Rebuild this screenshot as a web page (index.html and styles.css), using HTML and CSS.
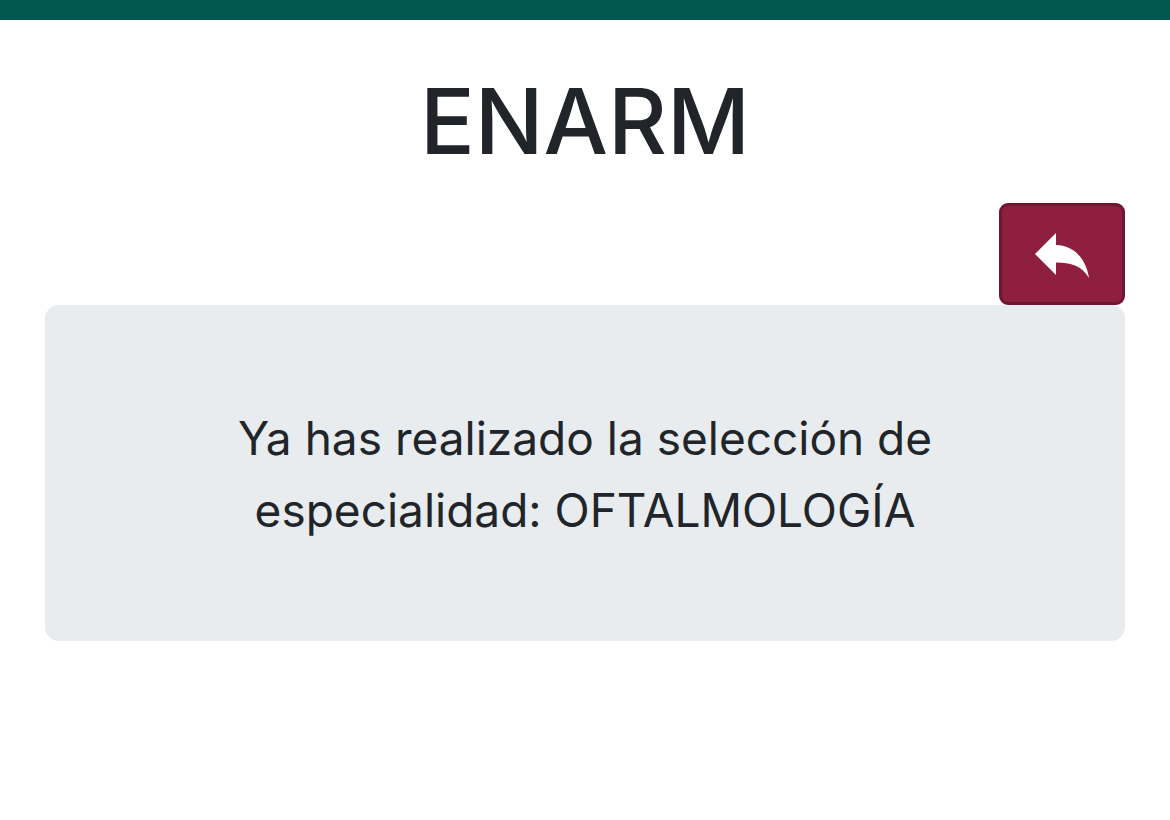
FILE: index.html
```html
<!DOCTYPE html>
<html lang="es">
<head>
  <meta charset="UTF-8">
  <meta name="viewport" content="width=device-width, initial-scale=1.0">
  <title>ENARM</title>
  <link rel="stylesheet" href="styles.css">
</head>
<body>
  <header class="topbar"></header>
  <main class="container">
    <h1>ENARM</h1>
    <div class="actions">
      <button type="button" class="btn-back" aria-label="Regresar">
        <svg viewBox="0 0 54 46" width="54" height="46" aria-hidden="true">
          <path fill="#fff" d="M0 21 L21 0 V12 C38 12 51 25 54 45 C47 33 36 29.500 21 29.500 V42 Z"/>
        </svg>
      </button>
    </div>
    <div class="jumbotron">
      <p>Ya has realizado la selección de especialidad: OFTALMOLOGÍA</p>
    </div>
  </main>
</body>
</html>
```

FILE: styles.css
```css
body { font-family: Inter, sans-serif; margin: 0; background: #fff; color: #212529; }
.topbar { height: 20px; background: #00584e; }
.container { padding: 44px 45px; }
h1 { margin: 0 0 24px; font-size: 91px; line-height: 115px; font-weight: 500; text-align: center; }
.actions { display: flex; justify-content: flex-end; }
.btn-back { display: flex; align-items: center; justify-content: center; width: 126px; height: 102px; padding: 4px 0 0; background: #8e1f3f; border: 3px solid #701532; border-radius: 9px; cursor: pointer; }
.jumbotron { padding: 97px 144px 95px; background: #e8ecef; border-radius: 14px; text-align: center; }
.jumbotron p { margin: 0; font-size: 46px; line-height: 72px; }
```
